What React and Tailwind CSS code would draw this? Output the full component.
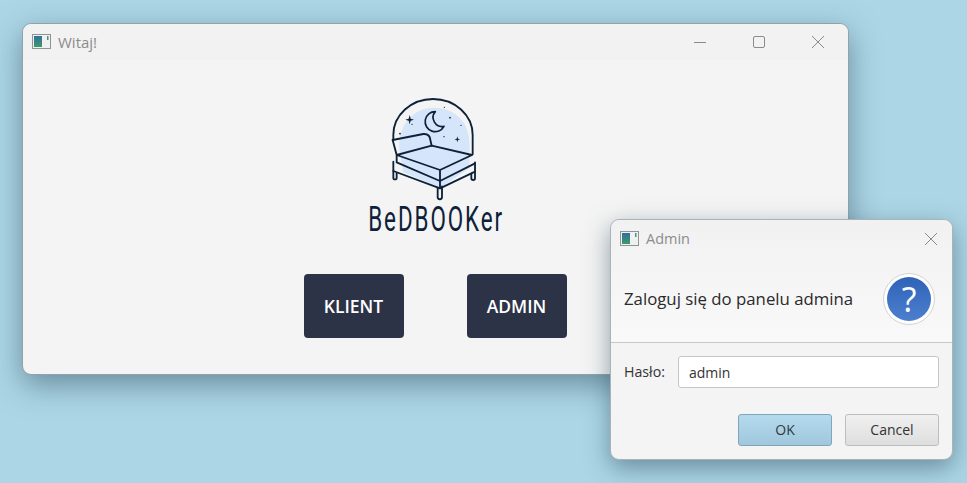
import React from 'react';

const sans = "font-['Open_Sans','Liberation_Sans',sans-serif]";

// small app icon used in both title bars
const AppIcon = () => (
    <svg width="20" height="16" viewBox="0 0 20 16" className="shrink-0">
        <defs>
            <linearGradient id="appIconFill" x1="0" y1="0" x2="0" y2="1">
                <stop offset="0" stopColor="#2f6f9f" />
                <stop offset="1" stopColor="#3f9a6a" />
            </linearGradient>
        </defs>
        <rect x="0.5" y="0.5" width="18" height="14" fill="#eef1f0" stroke="#8f9597" />
        <rect x="2" y="2" width="8" height="11" fill="url(#appIconFill)" />
        <rect x="15" y="2" width="1.5" height="4" fill="#4f8f86" />
    </svg>
);

const Logo = () => (
    <svg width="160" height="118" viewBox="0 0 480 354" fill="none" className="shrink-0 ml-[9px]">
        <path d="M118 195C112 115 165 68 222 68C285 68 330 115 328 175V250L240 308L130 262Z" fill="#d5e5fa" />
        <path d="M110 210L215 182L336 210L240 255Z" fill="#d5e5fa" />
        <g stroke="#0d2138" strokeWidth="5.5" strokeLinejoin="round" strokeLinecap="round">
            <path d="M100 165V150A119 108 0 0 1 338 150V208" />
            <path d="M98 165L190 147C202 146 210 153 211 165L215 182" />
            <path d="M98 165L110 210L215 182L336 210L240 255L110 210V232L240 288V255M240 288L345 235" />
            <path d="M100 230V258L240 310L345 260V232" />
            <path d="M100 258V278C100 285 110 285 110 278V264" />
            <path d="M334 266V280C334 287 345 287 345 280V260" />
            <path d="M233 308V336C233 345 246 345 246 336V304" />
            <path d="M240 288V310" />
        </g>
        <path d="M226 80A30 30 0 1 0 252 124A27 27 0 0 1 226 80Z" stroke="#0d2138" strokeWidth="5" strokeLinejoin="round" />
        <path d="M149 90L152 101L162 104L152 107L149 118L146 107L136 104L146 101Z" fill="#0d2138" />
        <path d="M292 154L294 161L301 163L294 165L292 172L290 165L283 163L290 161Z" fill="#0d2138" />
        <g fill="#0d2138">
            <circle cx="253" cy="67" r="2" />
            <circle cx="270" cy="98" r="2.5" />
            <circle cx="303" cy="121" r="2" />
            <circle cx="252" cy="155" r="2" />
            <circle cx="156" cy="118" r="2" />
            <circle cx="120" cy="146" r="2.5" />
        </g>
    </svg>
);

const App = () => {
    return (
        <div className={`relative w-[967px] h-[483px] overflow-hidden bg-[#acd6e6] ${sans}`}>
            {/* main window */}
            <div className="absolute left-[22px] top-[23px] w-[827px] h-[352px] flex flex-col rounded-[9px] bg-[#f4f4f4] border border-[#8fa3ad] shadow-[0_10px_30px_rgba(40,70,85,0.5)]">
                <div className="flex items-center h-[36px] pl-[9px] bg-[#f2f2f2] rounded-t-[9px]">
                    <AppIcon />
                    <span className="ml-[6px] text-[15px] text-[#8c8c8c]">Witaj!</span>
                    <div className="ml-auto flex items-center">
                        <svg width="14" height="14" viewBox="0 0 14 14" className="mr-[45px]">
                            <path d="M1 7.5H13" stroke="#8a8a8a" />
                        </svg>
                        <svg width="14" height="14" viewBox="0 0 14 14" className="mr-[45px]">
                            <rect x="1.5" y="1.5" width="11" height="11" rx="1.5" fill="none" stroke="#8a8a8a" />
                        </svg>
                        <svg width="14" height="14" viewBox="0 0 14 14" className="mr-[23px]">
                            <path d="M1 1L13 13M13 1L1 13" stroke="#8a8a8a" />
                        </svg>
                    </div>
                </div>
                <div className="flex flex-col items-center pt-[25px]">
                    <Logo />
                    <div className="h-[36px] mt-[-2px] ml-[2px] flex items-center text-[35px] leading-none text-[#0d2138] font-['Roboto',sans-serif] font-normal tracking-[3px] scale-x-[0.64]">
                        BeDBOOKer
                    </div>
                    <div className="flex gap-[63px] mt-[37px] ml-[-1px]">
                        <button className="w-[100px] h-[64px] rounded-[4px] bg-[#2c3347] text-white text-[17.5px] font-semibold">
                            KLIENT
                        </button>
                        <button className="w-[100px] h-[64px] rounded-[4px] bg-[#2c3347] text-white text-[17.5px] font-semibold">
                            ADMIN
                        </button>
                    </div>
                </div>
            </div>

            {/* login dialog */}
            <div className="absolute left-[610px] top-[219px] w-[343px] h-[241px] flex flex-col rounded-[9px] bg-[#f4f4f4] border border-[#a8b4ba] shadow-[0_8px_24px_rgba(40,70,85,0.5)]">
                <div className="flex flex-col h-[123px] border-b border-[#c8c8c8] rounded-t-[9px] bg-gradient-to-b from-[#f1f1f1] to-[#f9f9f9]">
                    <div className="flex items-center h-[36px] pt-[1px] pl-[9px] pr-[14px]">
                        <AppIcon />
                        <span className="ml-[6px] text-[14.5px] text-[#8c8c8c]">Admin</span>
                        <svg width="14" height="14" viewBox="0 0 14 14" className="ml-auto">
                            <path d="M1 1L13 13M13 1L1 13" stroke="#8a8a8a" />
                        </svg>
                    </div>
                    <div className="flex items-center justify-between flex-1 pl-[13px] pr-[17px]">
                        <span className="text-[16.8px] text-[#2a2a2a]">Zaloguj się do panelu admina</span>
                        <div className="flex items-center justify-center w-[52px] h-[52px] rounded-full bg-white border border-[#d4d4d4]">
                            <div className="flex items-center justify-center w-[44px] h-[44px] rounded-full bg-gradient-to-b from-[#2f63b8] to-[#4c7fce] text-white text-[34px] font-medium leading-none">
                                ?
                            </div>
                        </div>
                    </div>
                </div>
                <div className="flex items-center gap-[12px] mt-[13px] px-[13px]">
                    <span className="w-[42px] text-[14.2px] text-[#333333]">Hasło:</span>
                    <div className="flex items-center flex-1 h-[32px] pl-[10px] rounded-[3px] bg-white border border-[#c6c6c6] text-[14px] text-[#333333]">
                        admin
                    </div>
                </div>
                <div className="flex justify-end gap-[13px] mt-[26px] pr-[13px]">
                    <button className="w-[94px] h-[32px] pb-[2px] rounded-[3px] border border-[#7fa6ba] bg-gradient-to-b from-[#b4daed] to-[#a0c7dc] text-[14px] text-[#2f3a40]">
                        OK
                    </button>
                    <button className="w-[94px] h-[32px] pb-[2px] rounded-[3px] border border-[#bdbdbd] bg-gradient-to-b from-[#f0f0f0] to-[#dedede] text-[14px] text-[#333333]">
                        Cancel
                    </button>
                </div>
            </div>
        </div>
    );
};

export default App;
